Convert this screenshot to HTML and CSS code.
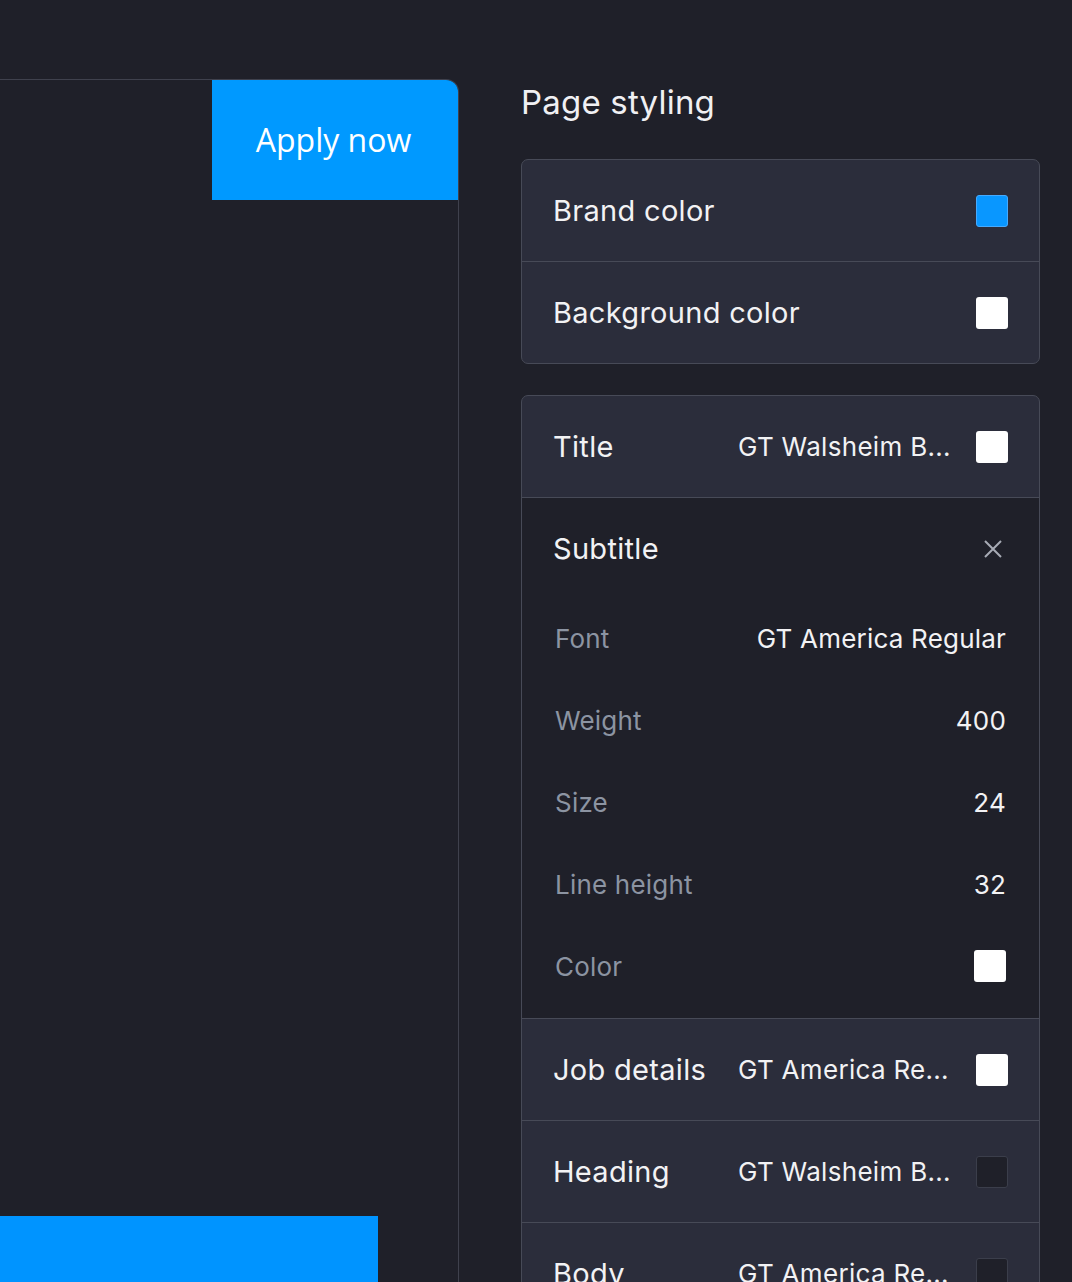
FILE: index.html
```html
<!DOCTYPE html>
<html lang="en">
<head>
    <meta charset="UTF-8">
    <meta name="viewport" content="width=device-width, initial-scale=1.0">
    <title>Page styling</title>
    <link rel="stylesheet" href="styles.css">
</head>
<body>
    <div class="preview">
        <div class="preview-card">
            <div class="preview-header">
                <button class="apply-btn">Apply now</button>
            </div>
            <div class="preview-footer"></div>
        </div>
    </div>

    <div class="sidebar">
        <h2 class="sidebar-title">Page styling</h2>

        <div class="group">
            <div class="row">
                <span class="row-label">Brand color</span>
                <span class="swatch swatch-blue"></span>
            </div>
            <div class="row">
                <span class="row-label">Background color</span>
                <span class="swatch swatch-white"></span>
            </div>
        </div>

        <div class="group">
            <div class="row">
                <span class="row-label">Title</span>
                <span class="row-value">GT Walsheim B...</span>
                <span class="swatch swatch-white"></span>
            </div>

            <div class="expanded">
                <div class="expanded-head">
                    <span class="row-label">Subtitle</span>
                    <svg class="close-icon" width="20" height="20" viewBox="0 0 20 20">
                        <path d="M2 2 L18 18 M18 2 L2 18" stroke="#a7abb5" stroke-width="2" fill="none"/>
                    </svg>
                </div>
                <div class="prop">
                    <span class="prop-label">Font</span>
                    <span class="prop-value">GT America Regular</span>
                </div>
                <div class="prop">
                    <span class="prop-label">Weight</span>
                    <span class="prop-value">400</span>
                </div>
                <div class="prop">
                    <span class="prop-label">Size</span>
                    <span class="prop-value">24</span>
                </div>
                <div class="prop">
                    <span class="prop-label">Line height</span>
                    <span class="prop-value">32</span>
                </div>
                <div class="prop">
                    <span class="prop-label">Color</span>
                    <span class="swatch swatch-white"></span>
                </div>
            </div>

            <div class="row">
                <span class="row-label">Job details</span>
                <span class="row-value">GT America Re...</span>
                <span class="swatch swatch-white"></span>
            </div>
            <div class="row">
                <span class="row-label">Heading</span>
                <span class="row-value">GT Walsheim B...</span>
                <span class="swatch swatch-dark"></span>
            </div>
            <div class="row">
                <span class="row-label">Body</span>
                <span class="row-value">GT America Re...</span>
                <span class="swatch swatch-dark"></span>
            </div>
        </div>
    </div>
</body>
</html>
```

FILE: styles.css
```css
body {
    margin: 0;
    background: #1f2029;
    font-family: 'Inter', 'Liberation Sans', sans-serif;
    color: #f2f2f4;
    display: flex;
    height: 1282px;
    overflow: hidden;
}
.preview {
    width: 459px;
    flex-shrink: 0;
    padding-top: 79px;
}
.preview-card {
    border-top: 1px solid #3f414d;
    border-right: 1px solid #3f414d;
    border-top-right-radius: 13px;
    height: 1400px;
    overflow: hidden;
}
.preview-header {
    display: flex;
    justify-content: flex-end;
}
.apply-btn {
    width: 246px;
    height: 120px;
    background: #0099ff;
    color: #fff;
    border: none;
    font-family: 'Open Sans', sans-serif;
    font-size: 32px;
    padding: 0 3px 2px 0;
    cursor: pointer;
}
.preview-footer {
    width: 378px;
    height: 200px;
    margin-top: 1016px;
    background: #0094ff;
}
.sidebar {
    width: 519px;
    margin-left: 62px;
}
.sidebar-title {
    font-weight: 400;
    font-size: 33px;
    margin: 80px 0 35px 0;
    line-height: 44px;
    color: #f0f0f3;
    letter-spacing: 0.2px;
}
.group {
    border: 1px solid #474a57;
    border-radius: 7px;
    background: #2b2d3b;
    margin-bottom: 31px;
    overflow: hidden;
}
.row {
    height: 102px;
    display: flex;
    align-items: center;
    padding: 0 31px 0 31px;
    border-top: 1px solid #474a57;
    box-sizing: border-box;
}
.group > .row:first-child {
    height: 101px;
    border-top: none;
}
.row-label {
    flex: 1;
    font-size: 29px;
    letter-spacing: 0.3px;
}
.row-value {
    width: 238px;
    font-size: 26px;
    letter-spacing: 0.3px;
}
.swatch {
    width: 32px;
    height: 32px;
    border-radius: 3px;
    box-sizing: border-box;
    flex-shrink: 0;
}
.swatch-blue {
    background: #0997ff;
    border: 1px solid #45aaff;
}
.swatch-white {
    background: #fff;
}
.swatch-dark {
    background: #1f2029;
    border: 1px solid #3b3e4b;
}
.expanded {
    background: #1f2029;
    border-top: 1px solid #474a57;
    padding-bottom: 11px;
}
.expanded-head {
    height: 99px;
    box-sizing: border-box;
    padding: 2px 36px 0 31px;
    display: flex;
    align-items: center;
}
.prop {
    height: 82px;
    display: flex;
    align-items: center;
    justify-content: space-between;
    padding: 0 33px 0 33px;
}
.prop-label {
    font-size: 26px;
    color: #8c94a2;
    letter-spacing: 0.2px;
}
.prop-value {
    font-size: 26px;
    letter-spacing: 0.2px;
}
```
